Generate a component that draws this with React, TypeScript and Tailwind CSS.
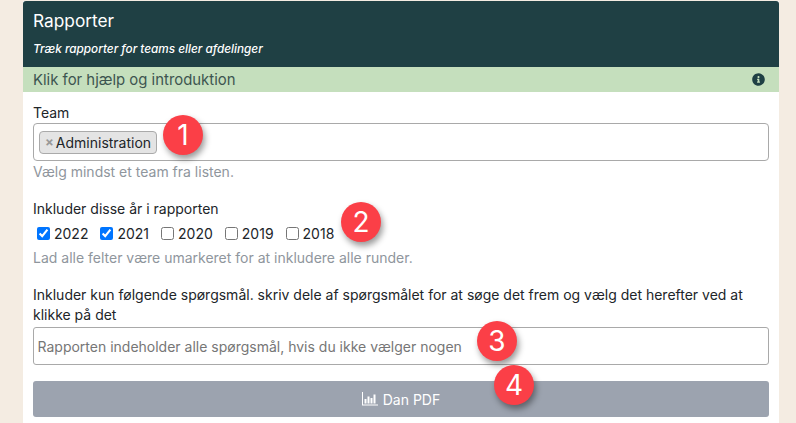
import React from 'react';

const years = [
  { label: '2022', checked: true },
  { label: '2021', checked: true },
  { label: '2020', checked: false },
  { label: '2019', checked: false },
  { label: '2018', checked: false },
];

const Marker = ({ n, className }: { n: number; className: string }) => (
  <div
    className={`absolute flex h-10 w-10 items-center justify-center rounded-full bg-[#fb3f47] text-[28px] leading-none text-white shadow-[2px_4px_6px_rgba(0,0,0,0.4)] ${className}`}
  >
    {n}
  </div>
);

const InfoIcon = () => (
  <svg viewBox="0 0 512 512" className="h-[13px] w-[13px]" fill="#1f4044">
    <path d="M256 8C119 8 8 119 8 256s111 248 248 248 248-111 248-248S393 8 256 8zm0 110c23 0 42 19 42 42s-19 42-42 42-42-19-42-42 19-42 42-42zm56 254c0 7-5 12-12 12h-88c-7 0-12-5-12-12v-24c0-7 5-12 12-12h12v-64h-12c-7 0-12-5-12-12v-24c0-7 5-12 12-12h64c7 0 12 5 12 12v100h12c7 0 12 5 12 12v24z" />
  </svg>
);

const ChartIcon = () => (
  <svg viewBox="0 0 16 14" className="h-[14px] w-[16px]" fill="#ffffff">
    <path d="M0 0h1v12.500h15v1H0z" />
    <path d="M2.500 7h2v4.500h-2zM5.500 4.500h2v7h-2zM8.500 6h2v5.500h-2zM11.500 2.500h2v9h-2z" />
  </svg>
);

export default function App() {
  return (
    <div className="h-[423px] w-[796px] overflow-hidden bg-[#f4ece2] font-['Inter',sans-serif] text-[14px] text-[#212529]">
      <div className="relative mx-[23px] mt-px h-[422px] w-[756px] bg-white">
        <div className="h-[66px] rounded-t-[3px] bg-[#1f4044] px-[10px] pt-[10px] text-white">
          <div className="text-[17.3px] leading-5">Rapporter</div>
          <div className="mt-[10px] text-[11.75px] font-medium italic leading-4">Træk rapporter for teams eller afdelinger</div>
        </div>

        <div className="flex h-[25px] items-center justify-between bg-[#c5dfbd] pl-[10px] pr-[14px] text-[14.9px] text-[#3d5550]">
          <span className="pt-px">Klik for hjælp og introduktion</span>
          <InfoIcon />
        </div>

        <div className="px-[10px] pt-[13px]">
          <div className="leading-4">Team</div>
          <div className="mt-[2px] flex h-[38px] items-center rounded border border-[#a9a9a9] px-[5px]">
            <div className="flex h-[23px] items-center rounded border border-[#aaaaaa] bg-[#e4e4e4] pl-[5px] pr-[5px]">
              <span className="mr-[2px] text-[13px] font-bold leading-none text-[#999999]">×</span>
              Administration
            </div>
          </div>
          <div className="mt-[3px] leading-4 text-[#8f969d]">Vælg mindst et team fra listen.</div>

          <div className="mt-[21px] leading-4">Inkluder disse år i rapporten</div>
          <div className="mt-[8px] flex h-4 items-center pl-[4px]">
            {years.map((y) => (
              <label key={y.label} className="mr-[12px] flex items-center">
                <input type="checkbox" defaultChecked={y.checked} className="m-0 mr-[4px] h-[13px] w-[13px]" />
                {y.label}
              </label>
            ))}
          </div>
          <div className="mt-[9px] leading-4 text-[#8f969d]">Lad alle felter være umarkeret for at inkludere alle runder.</div>

          <div className="mt-[19px] leading-[20px]">
            Inkluder kun følgende spørgsmål. skriv dele af spørgsmålet for at søge det frem og vælg det herefter ved at klikke på det
          </div>
          <div className="mt-[2px] flex h-[38px] items-center rounded-[3px] border border-[#a9a9a9] px-[3.500px] text-[#767676]">
            Rapporten indeholder alle spørgsmål, hvis du ikke vælger nogen
          </div>
          <div className="mt-[16px] flex h-[36px] items-center justify-center gap-[5px] rounded-[3px] bg-[#9ca3af] text-white">
            <ChartIcon />
            Dan PDF
          </div>
        </div>

        <Marker n={1} className="left-[140px] top-[114px]" />
        <Marker n={2} className="left-[318px] top-[201px]" />
        <Marker n={3} className="left-[454px] top-[320px]" />
        <Marker n={4} className="left-[471px] top-[364px]" />
      </div>
    </div>
  );
}
